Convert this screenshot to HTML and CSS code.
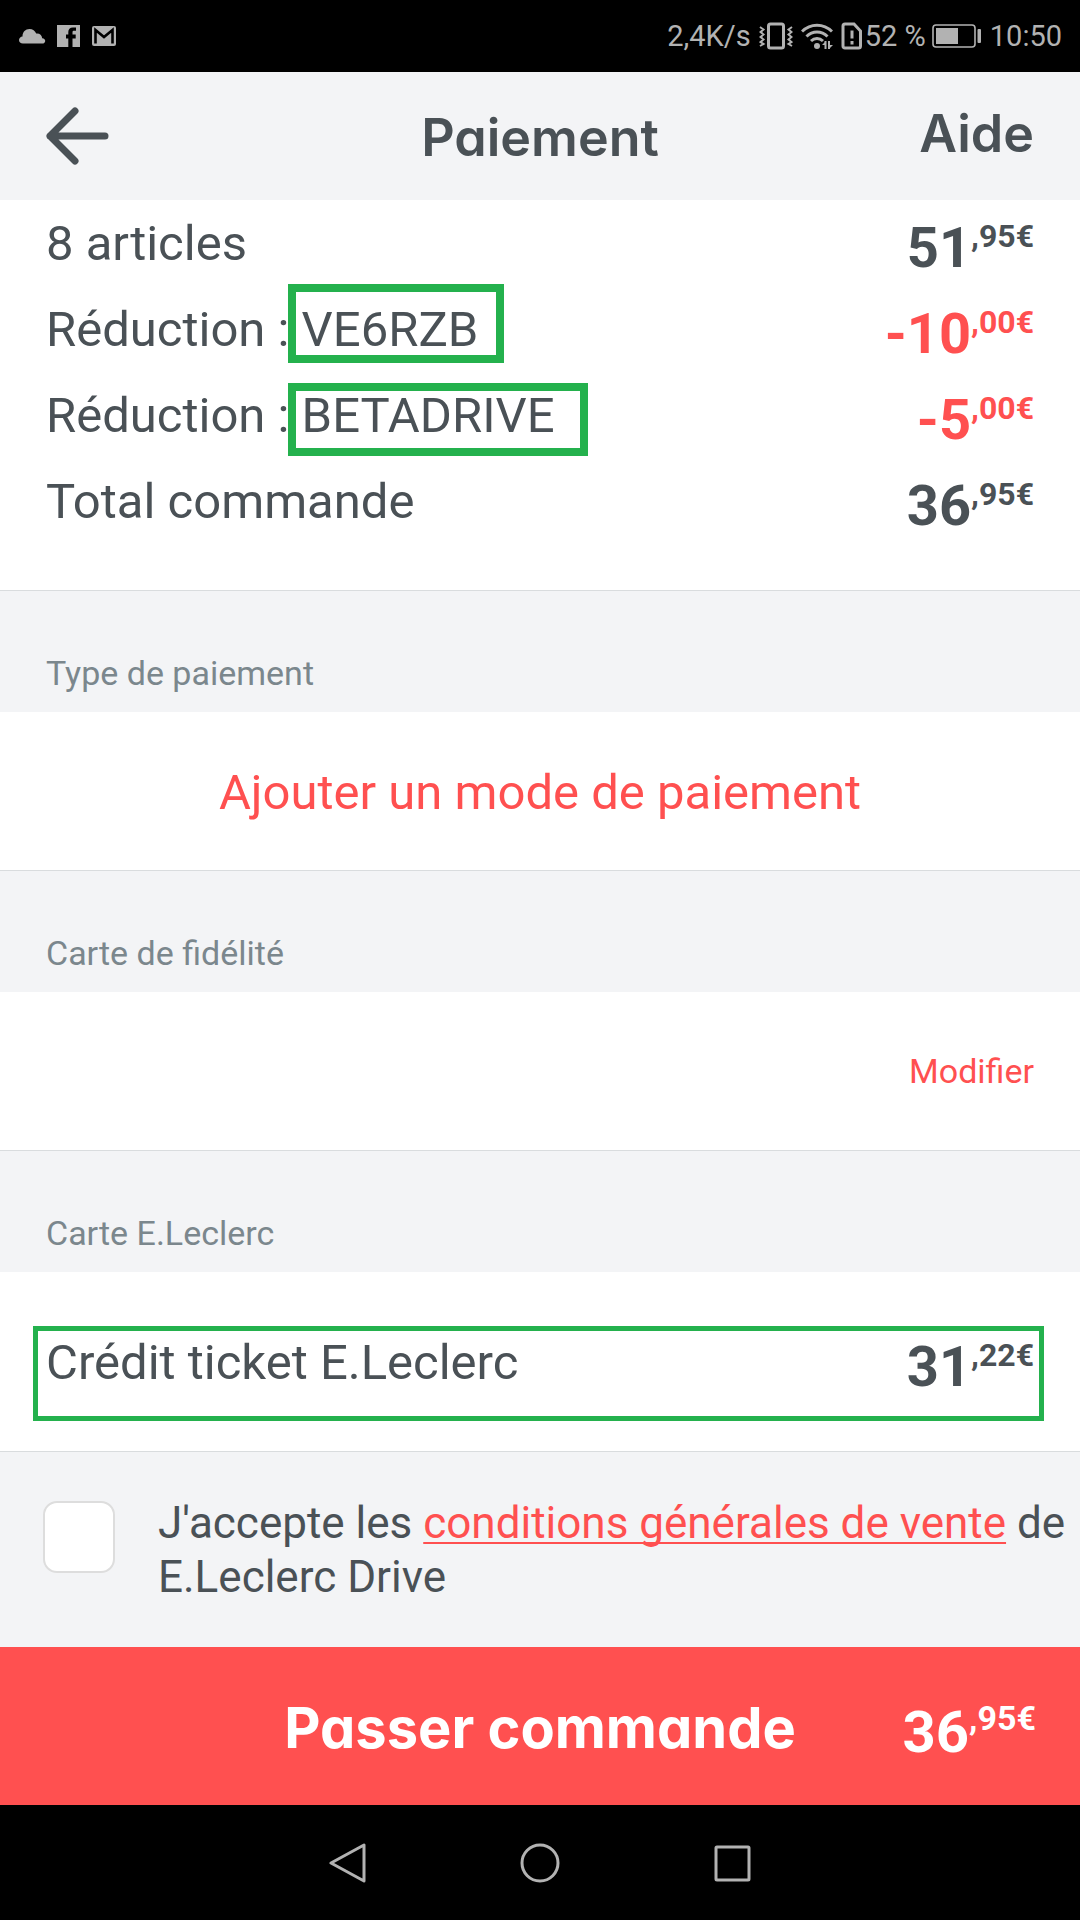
FILE: index.html
```html
<!DOCTYPE html>
<html lang="fr">
<head>
    <meta charset="UTF-8">
    <meta name="viewport" content="width=device-width, initial-scale=1.0">
    <title>Paiement</title>
    <link rel="stylesheet" href="styles.css">
</head>
<body>
    <div class="status-bar">
        <div class="status-left">
            <svg width="28" height="24" viewBox="0 0 28 24" fill="currentColor">
                <path d="M5 19.500C2.500 19.500 1 18 1 16c0-2 1.500-3.400 3.500-3.600C4.500 8 7.500 5 11.500 5c3.200 0 5.600 1.800 6.700 4.500 3.400-.4 5.600 1.600 6 4.700 2 .2 3 1.300 3 2.700 0 1.500-1.200 2.600-3 2.600z"/>
            </svg>
            <svg width="24" height="24" viewBox="0 0 24 24" fill="currentColor">
                <path d="M0 1h23v22h-7.500v-8.500h3.200v-4h-3.200V8.200c0-1 .6-1.400 1.500-1.400h2V3.500h-3c-3.200 0-4.700 1.800-4.700 4.500v2.500H9v4h2.300V23H0z"/>
            </svg>
            <svg width="24" height="24" viewBox="0 0 24 24">
                <rect x="0" y="2" width="24" height="20" rx="2" fill="currentColor"/>
                <path d="M3.500 19.500V6L12 13l8.500-7v13.500" fill="none" stroke="#000" stroke-width="2.600"/>
            </svg>
        </div>
        <div class="status-right">
            <span>2,4K/s</span>
            <svg width="34" height="28" viewBox="0 0 34 28" fill="none" stroke="currentColor">
                <rect x="9.500" y="2" width="15" height="24" rx="2" stroke-width="3"/>
                <path d="M1 5l3.500 2.500L1.500 10l3 2.500-3 2.500 3 2.500-3 2.500L4.500 22 1 24M33 5l-3.500 2.500 3 2.500-3 2.500 3 2.500-3 2.500 3 2.500-3 2L33 24" stroke-width="2"/>
            </svg>
            <svg width="32" height="28" viewBox="0 0 32 28" fill="none" stroke="currentColor" stroke-width="3">
                <path d="M1 9.500c8.500-8.500 21.500-8.500 30 0M5.500 14.500c6-6 15-6 21 0M10 19c3.500-3.300 8.500-3.300 12 0"/>
                <circle cx="16" cy="24" r="3" fill="currentColor" stroke="none"/>
                <path d="M24.500 19v8M28 19v8" stroke-width="2"/>
                <path d="M25 19l-4 4h4zM28 27l4-4h-4z" fill="currentColor" stroke="none"/>
            </svg>
            <svg width="22" height="28" viewBox="0 0 22 28" fill="none" stroke="currentColor" stroke-width="3">
                <path d="M4 2h9l6.500 7v15c0 1-.7 2-2 2H4c-1.300 0-2-.8-2-2V4c0-1.200.7-2 2-2z"/>
                <path d="M11 8.500v8M11 19v3.500"/>
            </svg>
            <span class="level">52 %</span>
            <svg width="50" height="26" viewBox="0 0 50 26">
                <rect x="1" y="2" width="42" height="22" rx="3" fill="none" stroke="currentColor" stroke-width="1.600"/>
                <rect x="4" y="5" width="22" height="16" fill="currentColor"/>
                <rect x="45.500" y="6" width="3.500" height="14" rx="1" fill="currentColor"/>
            </svg>
            <span>10:50</span>
        </div>
    </div>

    <header class="header">
        <button class="back" type="button" aria-label="Retour">
            <svg width="64" height="60" viewBox="0 0 64 60" fill="none" stroke="currentColor" stroke-width="7" stroke-linecap="round" stroke-linejoin="round">
                <path d="M29 5L4 30l25 25M4 30h55"/>
            </svg>
        </button>
        <h1>Paiement</h1>
        <a class="help" href="#">Aide</a>
    </header>

    <main>
        <section class="summary">
            <div class="row">
                <span>8 articles</span>
                <span class="price">51<sup>,95€</sup></span>
            </div>
            <div class="row">
                <span>Réduction : <span class="code">VE6RZB</span></span>
                <span class="price discount">-10<sup>,00€</sup></span>
            </div>
            <div class="row">
                <span>Réduction : <span class="code code-low">BETADRIVE</span></span>
                <span class="price discount">-5<sup>,00€</sup></span>
            </div>
            <div class="row">
                <span>Total commande</span>
                <span class="price">36<sup>,95€</sup></span>
            </div>
        </section>

        <h2>Type de paiement</h2>
        <section class="panel">
            <button class="add-payment" type="button">Ajouter un mode de paiement</button>
        </section>

        <h2>Carte de fidélité</h2>
        <section class="panel">
            <button class="edit" type="button">Modifier</button>
        </section>

        <h2>Carte E.Leclerc</h2>
        <section class="panel credit">
            <div class="row">
                <span>Crédit ticket E.Leclerc</span>
                <span class="price">31<sup>,22€</sup></span>
            </div>
        </section>

        <div class="terms">
            <input type="checkbox" id="accept">
            <label for="accept">J'accepte les <a href="#">conditions générales de vente</a> de E.Leclerc Drive</label>
        </div>
    </main>

    <button class="order" type="button">
        <span class="order-label">Passer commande</span>
        <span class="price">36<sup>,95€</sup></span>
    </button>

    <!-- Android navigation -->
    <nav class="nav-bar">
        <button type="button" aria-label="Précédent">
            <svg width="40" height="40" viewBox="0 0 40 40"><path d="M36 2v36L3 20z"/></svg>
        </button>
        <button type="button" aria-label="Accueil">
            <svg width="40" height="40" viewBox="0 0 40 40"><circle cx="20" cy="20" r="18"/></svg>
        </button>
        <button type="button" aria-label="Applications récentes">
            <svg width="40" height="40" viewBox="0 0 40 40"><rect x="4" y="4" width="33" height="33" rx="1"/></svg>
        </button>
    </nav>
</body>
</html>
```
FILE: styles.css
```css
* {
    box-sizing: border-box;
    margin: 0;
    padding: 0;
}

body {
    display: flex;
    flex-direction: column;
    min-height: 100vh;
    background-color: #f3f4f6;
    color: #4a5156;
    font-family: Roboto, "Liberation Sans", sans-serif;
    font-size: 49px;
}

button {
    border: none;
    background: none;
    color: inherit;
    font: inherit;
    cursor: pointer;
}

svg {
    display: block;
}

/* status bar */
.status-bar {
    height: 72px;
    padding: 0 18px;
    display: flex;
    justify-content: space-between;
    align-items: center;
    background-color: black;
    color: #b2b2b2;
    font-size: 29px;
}

.status-left {
    display: flex;
    align-items: center;
    gap: 11px;
}

.status-right {
    display: flex;
    align-items: center;
    gap: 8px;
}

.level {
    margin: 0 -2px 0 -6px;
}

/* header */
.header {
    height: 128px;
    padding: 0 46px;
    display: grid;
    grid-template-columns: 1fr auto 1fr;
    align-items: center;
    font-family: Inter, Roboto, sans-serif;
    font-feature-settings: "cv11";
}

.back {
    justify-self: start;
}

.header h1,
.help {
    font-size: 52px;
    font-weight: 600;
    line-height: 60px;
}

.header h1 {
    padding-top: 4px;
}

.help {
    justify-self: end;
    padding-bottom: 4px;
    color: inherit;
    text-decoration: none;
}

/* amounts */
.summary {
    padding: 1px 46px 45px;
    background-color: white;
    border-bottom: 1px solid #d9dcde;
}

.row {
    height: 86px;
    display: flex;
    justify-content: space-between;
    line-height: 86px;
}

.price {
    padding-top: 4px;
    font-size: 56px;
    font-weight: 700;
}

.price sup {
    font-size: 32px;
    line-height: 0;
    vertical-align: 20px;
}

.discount {
    color: #ff5050;
}

/* frames drawn over the codes */
.code {
    position: relative;
}

.code::after {
    content: "";
    position: absolute;
    inset: -17px -26px -5px -14px;
    border: 8px solid #24b14d;
}

.code-low::after {
    inset: -4px -33px -12px -14px;
}

/* sections */
h2 {
    padding: 60px 46px 16px;
    color: #7b878d;
    font-size: 34px;
    font-weight: 400;
    line-height: 45px;
}

.panel {
    padding: 0 46px;
    background-color: white;
    border-bottom: 1px solid #d9dcde;
}

.add-payment,
.edit {
    display: block;
    width: 100%;
    color: #ff5050;
    line-height: 158px;
}

.add-payment {
    padding-top: 4px;
    line-height: 154px;
}

.edit {
    font-size: 34px;
    text-align: right;
}

.credit {
    padding: 48px 46px 45px;
}

.credit .row {
    position: relative;
}

.credit .row::after {
    content: "";
    position: absolute;
    inset: 6px -10px -15px -13px;
    border: 5px solid #24b14d;
}

.terms {
    padding: 44px 8px 43px 43px;
    display: flex;
    align-items: flex-start;
    gap: 43px;
    font-size: 44px;
    line-height: 54px;
}

.terms input {
    flex: none;
    width: 72px;
    height: 72px;
    margin-top: 5px;
    appearance: none;
    background-color: white;
    border: 2px solid #dddddd;
    border-radius: 14px;
}

.terms a {
    color: #ff5050;
    text-decoration-thickness: 2px;
    text-decoration-skip-ink: none;
    text-underline-offset: 4px;
}

/* order button */
.order {
    height: 158px;
    padding: 0 44px;
    display: grid;
    grid-template-columns: 1fr auto 1fr;
    align-items: center;
    background-color: #ff5050;
    color: white;
}

.order-label {
    grid-column: 2;
    padding-top: 4px;
    font-family: Inter, Roboto, sans-serif;
    font-feature-settings: "cv11";
    font-size: 56px;
    font-weight: 700;
}

.order .price {
    justify-self: end;
    padding-top: 12px;
    font-size: 58px;
}

.order sup {
    font-size: 34px;
    vertical-align: 22px;
}

/* navigation bar */
.nav-bar {
    flex-grow: 1;
    min-height: 115px;
    display: flex;
    justify-content: center;
    align-items: center;
    gap: 152px;
    background-color: black;
}

.nav-bar svg {
    fill: none;
    stroke: #b2b2b2;
    stroke-width: 3px;
    stroke-linejoin: round;
}
```
